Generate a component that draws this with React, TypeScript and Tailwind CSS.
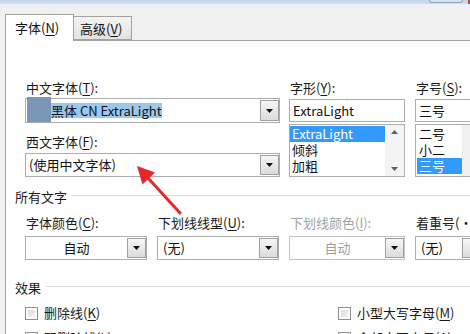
import React from "react";

const F = "font-['Noto_Sans_CJK_SC','Noto_Sans',sans-serif]";

function Arrow() {
  return (
    <svg width="7" height="4" viewBox="0 0 7 4">
      <path d="M0 0h7L3.5 4z" fill="#111" />
    </svg>
  );
}

function DropBtn() {
  return (
    <div className="my-[1px] flex w-[19px] items-center justify-center border border-[#a0a0a0] bg-linear-to-b from-[#f6f6f6] to-[#dcdcdc]">
      <Arrow />
    </div>
  );
}

function U({ children }: { children: React.ReactNode }) {
  return <span className="underline underline-offset-2">{children}</span>;
}

function Label({ children, grey }: { children: React.ReactNode; grey?: boolean }) {
  return (
    <div className={`h-[16px] pl-[1px] text-[13px] leading-[16px] whitespace-nowrap ${grey ? "text-[#a3a3a3]" : "text-[#1a1a1a]"}`}>
      {children}
    </div>
  );
}

function Check({ children }: { children: React.ReactNode }) {
  return (
    <div className="flex h-[16px] items-center">
      <div className="h-[13px] w-[13px] border border-[#8e8f8f] bg-white p-[2px]">
        <div className="h-full w-full bg-linear-to-br from-[#dcdcdc] to-[#f4f4f4]" />
      </div>
      <span className="ml-[6px] text-[13px] leading-[16px] whitespace-nowrap text-[#1a1a1a]">{children}</span>
    </div>
  );
}

function Heading({ children }: { children: React.ReactNode }) {
  return (
    <div className="-ml-[10px] flex h-[16px] items-center">
      <span className="text-[13px] leading-[16px] text-[#1a1a1a]">{children}</span>
      <div className="mt-[-3px] ml-[5px] h-px flex-1 bg-[#dcdcdc]" />
    </div>
  );
}

export default function App() {
  return (
    <div className={`relative h-[334px] w-[470px] overflow-hidden bg-[#f0f0f0] ${F}`}>
      {/* top window frame */}
      <div className="flex h-[4px] justify-end bg-linear-to-b from-[#c2d6ed] to-[#cfdff0]">
        <div className="mr-[5px] h-[3px] w-[34px] rounded-b-[3px] border border-t-0 border-[#8ea5bf] bg-[#d8e4f1]" />
        <div className="h-[4px] w-[2px] bg-[#c9473f]" />
      </div>
      <div className="flex h-[330px]">
        <div className="w-[3px] bg-[#bcd1ea]" />
        <div className="flex flex-1 flex-col pt-[10px] pl-[5px]">
          {/* tabs */}
          <div className="relative z-10 flex h-[27px] items-start">
            <div className="flex h-[27px] w-[69px] items-start border border-b-0 border-[#a3a3a3] bg-white pt-[5px] pl-[9px] text-[13px] leading-[16px] text-[#111]">
              字体(<U>N</U>)
            </div>
            <div className="mt-[2px] flex h-[24px] w-[58px] items-start border border-l-0 border-[#a3a3a3] bg-linear-to-b from-[#f3f3f3] to-[#e3e3e3] pt-[4px] pl-[6px] text-[13px] leading-[16px] text-[#111]">
              高级(<U>V</U>)
            </div>
          </div>
          {/* panel */}
          <div className="-mt-px flex flex-1 flex-col border-t border-l border-[#a3a3a3] bg-white pt-[39px] pl-[19px]">
            {/* top row */}
            <div className="flex">
              <div className="flex w-[255px] flex-col">
                <Label>中文字体(<U>T</U>):</Label>
                <div className="mt-[2px] flex h-[25px] border border-[#abadb3] bg-white">
                  <div className="flex flex-1 items-center">
                    <div className="-mt-[3px] ml-[1px] h-[25px] w-[24px] bg-[#7a97b7]" />
                    <span className="bg-[#9cc8ee] text-[13px] leading-[15px] text-[#111]">黑体 CN ExtraLight</span>
                  </div>
                  <DropBtn />
                </div>
                <div className="mt-[11px]">
                  <Label>西文字体(<U>F</U>):</Label>
                </div>
                <div className="mt-[3px] flex h-[24px] border border-[#abadb3] bg-white">
                  <div className="flex flex-1 items-center pl-[3px] text-[13px] text-[#111]">(使用中文字体)</div>
                  <DropBtn />
                </div>
              </div>
              <div className="ml-[9px] flex w-[116px] flex-col">
                <Label>字形(<U>Y</U>):</Label>
                <div className="mt-[3px] flex h-[23px] items-center border border-[#abadb3] bg-white pl-[3px] text-[13px] text-[#111]">
                  ExtraLight
                </div>
                <div className="mt-[2px] flex h-[53px] border border-[#abadb3] bg-white">
                  <div className="flex flex-1 flex-col pt-[1px] text-[13px] leading-[16px] text-[#111]">
                    <div className="h-[16px] overflow-hidden bg-[#3399ff] pl-[2px] text-white">ExtraLight</div>
                    <div className="h-[16px] overflow-hidden pl-[2px]">倾斜</div>
                    <div className="h-[16px] overflow-hidden pl-[2px]">加粗</div>
                  </div>
                  <div className="flex w-[19px] flex-col items-center justify-between bg-[#f4f4f4] py-[5px]">
                    <svg width="7" height="4" viewBox="0 0 7 4"><path d="M0 4h7L3.5 0z" fill="#606060" /></svg>
                    <svg width="7" height="4" viewBox="0 0 7 4"><path d="M0 0h7L3.5 4z" fill="#606060" /></svg>
                  </div>
                </div>
              </div>
              <div className="ml-[10px] flex w-[80px] flex-col">
                <Label>字号(<U>S</U>):</Label>
                <div className="mt-[3px] flex h-[23px] items-center border border-r-0 border-[#abadb3] bg-white pl-[3px] text-[13px] text-[#111]">
                  三号
                </div>
                <div className="mt-[2px] flex h-[53px] border border-r-0 border-[#abadb3] bg-white">
                  <div className="flex w-[46px] flex-col pt-[1px] pl-px text-[13px] leading-[16px] text-[#111]">
                    <div className="h-[16px] overflow-hidden pl-[2px]">二号</div>
                    <div className="h-[16px] overflow-hidden pl-[2px]">小二</div>
                    <div className="h-[16px] overflow-hidden bg-[#3399ff] pl-[2px] text-white">三号</div>
                  </div>
                  <div className="flex-1 bg-[#f0f0f0]" />
                </div>
              </div>
            </div>

            {/* 所有文字 */}
            <div className="mt-[12px]">
              <Heading>所有文字</Heading>
            </div>
            <div className="mt-[10px] flex">
              <div className="flex w-[122px] flex-col">
                <Label>字体颜色(<U>C</U>):</Label>
                <div className="mt-[5px] flex h-[24px] border border-[#abadb3] bg-white">
                  <div className="flex flex-1 items-center justify-center text-[13px] text-[#111]">自动</div>
                  <DropBtn />
                </div>
              </div>
              <div className="ml-[10px] flex w-[122px] flex-col">
                <Label>下划线线型(<U>U</U>):</Label>
                <div className="mt-[5px] flex h-[24px] border border-[#abadb3] bg-white">
                  <div className="flex flex-1 items-center pl-[5px] text-[13px] text-[#111]">(无)</div>
                  <DropBtn />
                </div>
              </div>
              <div className="ml-[10px] flex w-[116px] flex-col">
                <Label grey>下划线颜色(<U>I</U>):</Label>
                <div className="mt-[5px] flex h-[24px] border border-[#c4c4c4] bg-white">
                  <div className="flex flex-1 items-center justify-center text-[13px] text-[#a0a0a0]">自动</div>
                  <DropBtn />
                </div>
              </div>
              <div className="ml-[10px] flex w-[80px] flex-col">
                <Label>着重号(·):</Label>
                <div className="mt-[5px] flex h-[24px] border border-r-0 border-[#abadb3] bg-white">
                  <div className="flex w-[46px] items-center pl-[5px] text-[13px] text-[#111]">(无)</div>
                  <div className="my-[1px] flex-1 border border-r-0 border-[#a0a0a0] bg-linear-to-b from-[#f6f6f6] to-[#dcdcdc]" />
                </div>
              </div>
            </div>

            {/* 效果 */}
            <div className="mt-[20px]">
              <Heading>效果</Heading>
            </div>
            <div className="mt-[9px] flex">
              <div className="w-[313px]">
                <Check>删除线(<U>K</U>)</Check>
              </div>
              <Check>小型大写字母(<U>M</U>)</Check>
            </div>
            <div className="mt-[9px] flex">
              <div className="w-[313px]">
                <Check>双删除线(<U>L</U>)</Check>
              </div>
              <Check>全部大写字母(<U>A</U>)</Check>
            </div>
          </div>
        </div>
      </div>

      {/* red annotation arrow */}
      <svg className="pointer-events-none absolute top-0 left-0" width="470" height="334" viewBox="0 0 470 334">
        <polygon points="137,166 155,172.5 142.5,184.5" fill="#e8262b" />
        <line x1="148.5" y1="178.5" x2="180" y2="213" stroke="#e8262b" strokeWidth="3" strokeLinecap="round" />
      </svg>
    </div>
  );
}
